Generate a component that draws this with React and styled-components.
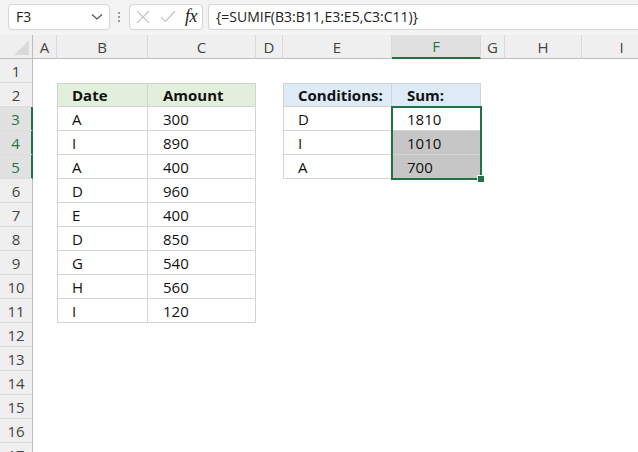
import React from "react";
import styled, { createGlobalStyle } from "styled-components";

const GlobalStyle = createGlobalStyle`
  html, body {
    margin: 0;
    padding: 0;
    background: #ffffff;
    overflow: hidden;
  }
  body {
    font-family: "Open Sans", "Liberation Sans", sans-serif;
  }
`;

const green = "#217346";

const Window = styled.div`
  width: 638px;
  height: 452px;
  overflow: hidden;
  background: #ffffff;
`;

const Toolbar = styled.div`
  display: flex;
  align-items: center;
  height: 35px;
  padding: 0 0 2px 8px;
  box-sizing: border-box;
  background: #f3f3f3;
`;

const NameBox = styled.div`
  display: flex;
  align-items: center;
  justify-content: space-between;
  width: 102px;
  height: 26px;
  box-sizing: border-box;
  background: #ffffff;
  border: 1px solid #d6d6d6;
  border-radius: 4px;
  padding: 0 6px 0 7px;
  font-size: 14px;
  color: #222;
`;

const Dots = styled.div`
  display: flex;
  flex-direction: column;
  gap: 2px;
  margin: 0 9px 0 8px;
  span {
    width: 2px;
    height: 2px;
    background: #9a9a9a;
  }
`;

const FnBox = styled.div`
  display: flex;
  align-items: center;
  justify-content: space-between;
  width: 74px;
  height: 26px;
  box-sizing: border-box;
  background: #ffffff;
  border: 1px solid #d6d6d6;
  border-radius: 4px;
  padding: 0 5px 0 6px;
`;

const Fx = styled.span`
  font-family: "Liberation Serif", "DejaVu Serif", serif;
  font-style: italic;
  font-size: 18px;
  color: #222;
  letter-spacing: -0.5px;
`;

const FormulaBox = styled.div`
  flex: 1;
  display: flex;
  align-items: center;
  height: 26px;
  margin-left: 5px;
  box-sizing: border-box;
  background: #ffffff;
  border: 1px solid #d6d6d6;
  border-right: none;
  border-radius: 4px 0 0 4px;
  padding-left: 7px;
  font-size: 14px;
  color: #222;
`;

const Sheet = styled.div`
  display: grid;
  grid-template-columns: 33px 24px 91px 108px 27px 109px 89px 24px 77px 80px;
  grid-template-rows: repeat(18, 24px);
`;

const Corner = styled.div`
  grid-row: 1;
  grid-column: 1;
  background: #efefef;
  border-right: 1px solid #bdbdbd;
  border-bottom: 1px solid #bdbdbd;
  box-sizing: border-box;
  position: relative;
  &::after {
    content: "";
    position: absolute;
    right: 3px;
    bottom: 3px;
    width: 0;
    height: 0;
    border-left: 15px solid transparent;
    border-bottom: 15px solid #dadada;
  }
`;

const ColHead = styled.div`
  grid-row: 1;
  grid-column: ${(p) => p.$c};
  display: flex;
  align-items: center;
  justify-content: center;
  box-sizing: border-box;
  background: ${(p) => (p.$active ? "#e1e1e1" : "#efefef")};
  color: ${(p) => (p.$active ? green : "#444")};
  font-size: 15px;
  border-right: 1px solid #d9d9d9;
  border-bottom: ${(p) => (p.$active ? `2px solid ${green}` : "1px solid #bdbdbd")};
`;

const RowHead = styled.div`
  grid-row: ${(p) => p.$r};
  grid-column: 1;
  display: flex;
  align-items: center;
  justify-content: center;
  box-sizing: border-box;
  background: ${(p) => (p.$active ? "#e1e1e1" : "#efefef")};
  color: ${(p) => (p.$active ? green : "#444")};
  font-size: 15px;
  border-bottom: 1px solid #dcdcdc;
  border-right: ${(p) => (p.$active ? `2px solid ${green}` : "1px solid #bdbdbd")};
`;

const Cell = styled.div`
  grid-row: ${(p) => p.$r};
  grid-column: ${(p) => p.$c};
  display: flex;
  align-items: center;
  box-sizing: border-box;
  padding-left: 15px;
  font-size: 15px;
  color: #111;
  font-weight: ${(p) => (p.$bold ? 700 : 400)};
  background: ${(p) => p.$fill || "#ffffff"};
  box-shadow: ${(p) =>
    p.$boxed
      ? [
          "inset -1px -1px 0 #d4d4d4",
          p.$top ? "inset 0 1px 0 #d4d4d4" : null,
          p.$left ? "inset 1px 0 0 #d4d4d4" : null,
        ]
          .filter(Boolean)
          .join(", ")
      : "none"};
`;

const Selection = styled.div`
  grid-column: 7;
  grid-row: 4 / span 3;
  margin: -1px;
  border: 2px solid ${green};
  pointer-events: none;
  position: relative;
  &::after {
    content: "";
    position: absolute;
    right: -5px;
    bottom: -5px;
    width: 6px;
    height: 6px;
    background: ${green};
    border: 1px solid #fff;
  }
`;

const cols = ["A", "B", "C", "D", "E", "F", "G", "H", "I"];

const amounts = [
  ["A", "300"],
  ["I", "890"],
  ["A", "400"],
  ["D", "960"],
  ["E", "400"],
  ["D", "850"],
  ["G", "540"],
  ["H", "560"],
  ["I", "120"],
];

const sums = [
  ["D", "1810"],
  ["I", "1010"],
  ["A", "700"],
];

function cellFor(row, col) {
  // B2:C11 table
  if ((col === "B" || col === "C") && row >= 2 && row <= 11) {
    const props = { $boxed: true, $top: row === 2, $left: col === "B" };
    if (row === 2) {
      return { text: col === "B" ? "Date" : "Amount", ...props, $bold: true, $fill: "#e2efda" };
    }
    const d = amounts[row - 3];
    return { text: col === "B" ? d[0] : d[1], ...props };
  }
  // E2:F5 table
  if ((col === "E" || col === "F") && row >= 2 && row <= 5) {
    const props = { $boxed: true, $top: row === 2, $left: col === "E" };
    if (row === 2) {
      return { text: col === "E" ? "Conditions:" : "Sum:", ...props, $bold: true, $fill: "#ddebf7" };
    }
    const d = sums[row - 3];
    if (col === "F" && row > 3) {
      return { text: d[1], ...props, $fill: "#c6c6c6" };
    }
    return { text: col === "E" ? d[0] : d[1], ...props };
  }
  return { text: "" };
}

const Chevron = () => (
  <svg width="12" height="8" viewBox="0 0 12 8">
    <path d="M1 1.5 L6 6 L11 1.5" fill="none" stroke="#555" strokeWidth="1.3" />
  </svg>
);

const Cross = () => (
  <svg width="14" height="14" viewBox="0 0 14 14">
    <path d="M1 1 L13 13 M13 1 L1 13" stroke="#c4c4c4" strokeWidth="1.2" />
  </svg>
);

const Check = () => (
  <svg width="16" height="13" viewBox="0 0 16 13">
    <path d="M1 7 L5.5 11.5 L15 1" fill="none" stroke="#c4c4c4" strokeWidth="1.2" />
  </svg>
);

export default function App() {
  const rows = Array.from({ length: 17 }, (_, i) => i + 1);
  return (
    <Window>
      <GlobalStyle />
      <Toolbar>
        <NameBox>
          <span>F3</span>
          <Chevron />
        </NameBox>
        <Dots>
          <span />
          <span />
          <span />
        </Dots>
        <FnBox>
          <Cross />
          <Check />
          <Fx>fx</Fx>
        </FnBox>
        <FormulaBox>{"{=SUMIF(B3:B11,E3:E5,C3:C11)}"}</FormulaBox>
      </Toolbar>
      <Sheet>
        <Corner />
        {cols.map((c, ci) => (
          <ColHead key={c} $c={ci + 2} $active={c === "F"}>
            {c}
          </ColHead>
        ))}
        {rows.map((r) => (
          <React.Fragment key={r}>
            <RowHead $r={r + 1} $active={r >= 3 && r <= 5}>
              {r}
            </RowHead>
            {cols.map((c, ci) => {
              const { text, ...props } = cellFor(r, c);
              return (
                <Cell key={c} $r={r + 1} $c={ci + 2} {...props}>
                  {text}
                </Cell>
              );
            })}
          </React.Fragment>
        ))}
        <Selection />
      </Sheet>
    </Window>
  );
}
